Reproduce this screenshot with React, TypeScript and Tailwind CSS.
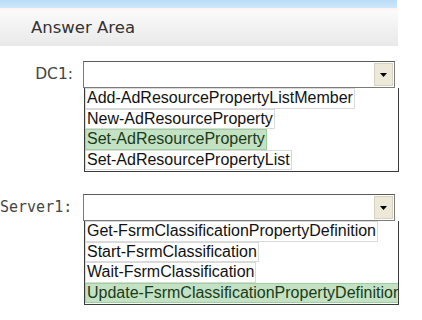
const dc1Items = [
  { text: "Add-AdResourcePropertyListMember", picked: false },
  { text: "New-AdResourceProperty", picked: false },
  { text: "Set-AdResourceProperty", picked: true },
  { text: "Set-AdResourcePropertyList", picked: false },
]

const server1Items = [
  { text: "Get-FsrmClassificationPropertyDefinition", picked: false },
  { text: "Start-FsrmClassification", picked: false },
  { text: "Wait-FsrmClassification", picked: false },
  { text: "Update-FsrmClassificationPropertyDefinition", picked: true },
]

function Select({ items }: { items: { text: string; picked: boolean }[] }) {
  return (
    <div className="flex flex-col">
      <div className="flex h-[27px] w-[312px] items-center justify-end border border-[#7b7b7b] border-t-[#5a5a5a] bg-white pr-[1px]">
        <div className="flex h-[23px] w-[19px] items-center justify-center border border-[#d6d2c2] bg-[#ece9d8]">
          <svg width="7" height="4" viewBox="0 0 7 4">
            <path d="M0 0h7L3.5 4z" fill="#000" />
          </svg>
        </div>
      </div>
      <ul className="ml-[1px] flex w-[315px] flex-col items-start overflow-hidden border border-t-0 border-[#3a3a3a] bg-white pb-[1px] font-['Liberation_Sans',Arial,sans-serif] text-[16px] leading-[18.5px] text-[#111]">
        {items.map((item) => (
          <li
            key={item.text}
            className={
              item.picked
                ? "whitespace-nowrap border border-[#9fcf9f] bg-[#c3e2c3] px-[1px] text-[#1a3a1a]"
                : "whitespace-nowrap border border-[#dadada] px-[1px]"
            }
          >
            {item.text}
          </li>
        ))}
      </ul>
    </div>
  )
}

export default function App() {
  return (
    <div className="h-[320px] w-[422px] overflow-hidden bg-white">
      <div className="h-[8px] w-[397px] bg-gradient-to-b from-[#b9dcf6] to-[#cfe8fa]" />
      <div className="h-[2px] w-[398px] bg-[#fdf3f3]" />
      <div className="flex h-[36px] w-[398px] items-center bg-gradient-to-b from-[#fbfbfb] to-[#e9e9e9] pl-[31px] font-['DejaVu_Sans',Verdana,sans-serif] text-[16.5px] text-[#333]">
        Answer Area
      </div>

      <div className="mt-[15px] flex items-start">
        <div className="flex h-[27px] w-[83px] items-center justify-end pr-[10px] font-['DejaVu_Sans',Verdana,sans-serif] text-[15.5px] text-[#444]">
          DC1:
        </div>
        <Select items={dc1Items} />
      </div>

      <div className="mt-[22px] flex items-start">
        <div className="flex h-[27px] w-[83px] items-center pl-0 font-['DejaVu_Sans_Mono',monospace] text-[15px] text-[#444]">
          Server1:
        </div>
        <Select items={server1Items} />
      </div>
    </div>
  )
}
